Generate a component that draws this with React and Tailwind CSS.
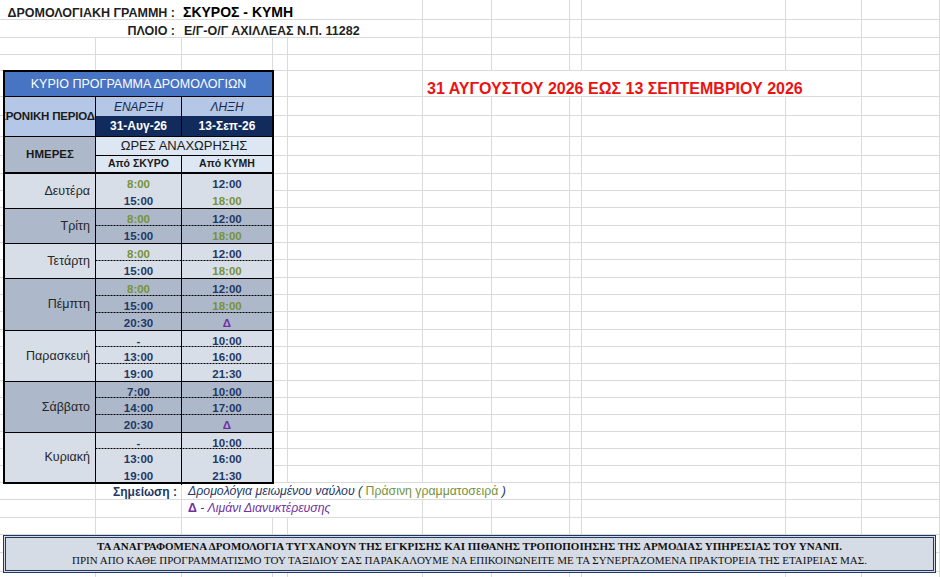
import React from "react";

const COLS = "grid-cols-[96px_86px_91px_15px_135px_69px_78px_12px_204px_76px_78px]";
const ROWS =
  "grid-rows-[20px_18px_17px_16px_26px_19px_21px_19px_18px_17px_17px_18px_17px_17px_18px_17px_17px_18px_17px_17px_17px_17px_17px_17px_17px_17px_17px_17px_18px_17px_18px_19px_18px]";

const DASH =
  "bg-[linear-gradient(to_right,#000_2px,transparent_2px)] bg-[length:3px_1px] bg-bottom bg-repeat-x";

const N = "text-[#1f3864]";
const GR = "text-[#76923c]";
const P = "text-[#7030a0]";

const LIGHT = "bg-[#d8dee7]";
const DARK = "bg-[#adb9ca]";

const days = [
  {
    name: "Δευτέρα",
    bg: LIGHT,
    h: "h-[34px]",
    first: true,
    dashed: false,
    rows: [
      { h: "h-[17px]", a: ["8:00", GR], b: ["12:00", N] },
      { h: "h-[17px]", a: ["15:00", N], b: ["18:00", GR] },
    ],
  },
  {
    name: "Τρίτη",
    bg: DARK,
    h: "h-[35px]",
    dashed: true,
    rows: [
      { h: "h-[17px]", a: ["8:00", GR], b: ["12:00", N] },
      { h: "h-[17px]", a: ["15:00", N], b: ["18:00", GR] },
    ],
  },
  {
    name: "Τετάρτη",
    bg: LIGHT,
    h: "h-[35px]",
    dashed: true,
    rows: [
      { h: "h-[17px]", a: ["8:00", GR], b: ["12:00", N] },
      { h: "h-[17px]", a: ["15:00", N], b: ["18:00", GR] },
    ],
  },
  {
    name: "Πέμπτη",
    bg: DARK,
    h: "h-[52px]",
    dashed: true,
    rows: [
      { h: "h-[17px]", a: ["8:00", GR], b: ["12:00", N] },
      { h: "h-[17px]", a: ["15:00", N], b: ["18:00", GR] },
      { h: "h-[17px]", a: ["20:30", N], b: ["Δ", P] },
    ],
  },
  {
    name: "Παρασκευή",
    bg: LIGHT,
    h: "h-[51px]",
    dashed: true,
    rows: [
      { h: "h-[16px]", a: ["-", N], b: ["10:00", N] },
      { h: "h-[17px]", a: ["13:00", N], b: ["16:00", N] },
      { h: "h-[17px]", a: ["19:00", N], b: ["21:30", N] },
    ],
  },
  {
    name: "Σάββατο",
    bg: DARK,
    h: "h-[51px]",
    dashed: true,
    rows: [
      { h: "h-[16px]", a: ["7:00", N], b: ["10:00", N] },
      { h: "h-[17px]", a: ["14:00", N], b: ["17:00", N] },
      { h: "h-[17px]", a: ["20:30", N], b: ["Δ", P] },
    ],
  },
  {
    name: "Κυριακή",
    bg: LIGHT,
    h: "h-[50px]",
    dashed: true,
    onlyFirstDash: true,
    rows: [
      { h: "h-[16px]", a: ["-", N], b: ["10:00", N] },
      { h: "h-[17px]", a: ["13:00", N], b: ["16:00", N] },
      { h: "h-[16px]", a: ["19:00", N], b: ["21:30", N] },
    ],
  },
];

function Gridlines() {
  return (
    <div className={`col-start-1 col-end-12 row-start-1 row-end-34 grid ${COLS} ${ROWS}`}>
      {Array.from({ length: 11 * 33 }, (_, i) => (
        <div key={i} className="border-r border-b border-[#dadada]" />
      ))}
    </div>
  );
}

function Day({ d }) {
  return (
    <div
      className={`shrink-0 grid grid-cols-[91px_176px] ${d.bg} ${d.h} ${
        d.first ? "" : "border-t border-black"
      }`}
    >
      <div className="border-r border-black flex items-center justify-end pr-[5px] text-[12.5px] text-[#262626]">
        {d.name}
      </div>
      <div className="flex flex-col">
        {d.rows.map((r, i) => {
          const dashed =
            d.dashed && i < d.rows.length - 1 && (!d.onlyFirstDash || i === 0);
          return (
            <div key={i} className={`shrink-0 grid grid-cols-[86px_90px] ${r.h} ${dashed ? DASH : ""}`}>
              <div
                className={`border-r border-black flex items-center justify-center pt-[2px] font-bold text-[11.5px] ${r.a[1]}`}
              >
                {r.a[0]}
              </div>
              <div className={`flex items-center justify-center pt-[2px] font-bold text-[11.5px] ${r.b[1]}`}>
                {r.b[0]}
              </div>
            </div>
          );
        })}
      </div>
    </div>
  );
}

function Table() {
  return (
    <div className="col-start-1 col-end-4 row-start-5 row-end-28 self-start justify-self-start ml-[3px] -mt-[1px] w-[271px] h-[414px] border-2 border-black flex flex-col bg-white">
      <div className="h-[25px] shrink-0 bg-[#4874c4] border-b border-black flex items-center justify-center text-white text-[12.5px] whitespace-nowrap">
        ΚΥΡΙΟ ΠΡΟΓΡΑΜΜΑ ΔΡΟΜΟΛΟΓΙΩΝ
      </div>
      <div className="h-[40px] shrink-0 border-b border-black grid grid-cols-[91px_86px_90px] grid-rows-[19px_20px]">
        <div className="row-span-2 bg-[#b4c7e7] border-r border-black overflow-hidden flex items-center justify-center pl-[8px] font-bold text-[11.5px] tracking-[-0.2px] text-[#1a1a1a] whitespace-nowrap">
          ΧΡΟΝΙΚΗ ΠΕΡΙΟΔΟΣ
        </div>
        <div className="bg-[#b4c7e7] border-r border-black flex items-center justify-center italic text-[12px] text-[#152a50]">
          ΕΝΑΡΞΗ
        </div>
        <div className="bg-[#b4c7e7] flex items-center justify-center italic text-[12px] text-[#152a50]">
          ΛΗΞΗ
        </div>
        <div className="bg-[#112c5c] border-r border-black flex items-center justify-center font-bold text-[12px] text-white">
          31-Αυγ-26
        </div>
        <div className="bg-[#112c5c] flex items-center justify-center font-bold text-[12px] text-white">
          13-Σεπ-26
        </div>
      </div>
      <div className="h-[37px] shrink-0 border-b-2 border-black grid grid-cols-[91px_86px_90px] grid-rows-[19px_16px]">
        <div className="row-span-2 bg-[#adb9ca] border-r border-black flex items-center justify-center font-bold text-[11.5px] text-[#1a1a1a]">
          ΗΜΕΡΕΣ
        </div>
        <div className="col-span-2 bg-[#dde7f3] border-b border-black flex items-center justify-center text-[13px] text-[#1a1a1a]">
          ΩΡΕΣ ΑΝΑΧΩΡΗΣΗΣ
        </div>
        <div className="bg-[#dde7f3] border-r border-black flex items-center justify-center font-bold text-[10.5px] text-[#1a1a1a]">
          Από ΣΚΥΡΟ
        </div>
        <div className="bg-[#dde7f3] flex items-center justify-center font-bold text-[10.5px] text-[#1a1a1a]">
          Από ΚΥΜΗ
        </div>
      </div>
      {days.map((d) => (
        <Day key={d.name} d={d} />
      ))}
    </div>
  );
}

export default function App() {
  return (
    <div className="w-[940px] h-[577px] overflow-hidden bg-white font-['Liberation_Sans',Arial,sans-serif] text-[#1f1f1f]">
      <div className={`grid ${COLS} ${ROWS}`}>
        <Gridlines />

        {/* Row 1 */}
        <div className="col-start-1 col-end-6 row-start-1 bg-white border-r border-b border-[#dadada] flex items-end whitespace-nowrap font-bold text-[12.5px]">
          <div className="leading-[12px]">
            <span className="inline-block w-[182px] pr-[7px] text-right text-[12.5px]">
              ΔΡΟΜΟΛΟΓΙΑΚΗ ΓΡΑΜΜΗ :
            </span>
            <span className="pl-[1px] text-[14px] text-black">ΣΚΥΡΟΣ - ΚΥΜΗ</span>
          </div>
        </div>

        {/* Row 2 */}
        <div className="col-start-1 col-end-6 row-start-2 bg-white border-r border-b border-[#dadada] flex items-end whitespace-nowrap font-bold text-[12.5px]">
          <div className="leading-[12px]">
            <span className="inline-block w-[182px] pr-[7px] text-right">ΠΛΟΙΟ :</span>
            <span className="pl-[2px]">Ε/Γ-Ο/Γ ΑΧΙΛΛΕΑΣ Ν.Π. 11282</span>
          </div>
        </div>

        {/* Red period title */}
        <div className="col-start-6 col-end-11 row-start-5 bg-white border-r border-b border-[#dadada] flex items-end pl-[4px] leading-[14px] whitespace-nowrap font-bold text-[16px] text-[#ee1111]">
          31 ΑΥΓΟΥΣΤΟΥ 2026 ΕΩΣ 13 ΣΕΠΤΕΜΒΡΙΟΥ 2026
        </div>

        {/* Notes */}
        <div className="col-start-2 row-start-28 flex items-center justify-end pr-[5px] font-bold text-[12px] text-[#1f3864] whitespace-nowrap">
          Σημείωση :
        </div>
        <div className="col-start-3 col-end-8 row-start-28 bg-white border-r border-b border-[#dadada] flex items-center pl-[6px] text-[12.3px] whitespace-nowrap">
          <span className="italic text-[#1f3864]">Δρομολόγια μειωμένου ναύλου (&nbsp;</span>
          <span className="text-[#76923c]">Πράσινη γραμματοσειρά</span>
          <span className="italic text-[#1f3864]">&nbsp;)</span>
        </div>
        <div className="col-start-3 col-end-6 row-start-29 bg-white border-r border-b border-[#dadada] flex items-center pl-[6px] text-[12.3px] text-[#7030a0] whitespace-nowrap">
          <span className="font-bold">Δ</span>
          <span className="italic">&nbsp;- Λιμάνι Διανυκτέρευσης</span>
        </div>

        {/* Banner */}
        <div className="col-start-1 col-end-12 row-start-31 row-end-33 self-start ml-[3px] mr-[4px] h-[38px] pb-[3px] border-[3px] border-double border-[#1f3864] bg-[#d6dce5] flex flex-col items-center justify-center font-['Liberation_Serif',serif] text-[11px] leading-[14px] text-[#111] whitespace-nowrap">
          <div className="font-bold">
            ΤΑ ΑΝΑΓΡΑΦΟΜΕΝΑ ΔΡΟΜΟΛΟΓΙΑ ΤΥΓΧΑΝΟΥΝ ΤΗΣ ΕΓΚΡΙΣΗΣ ΚΑΙ ΠΙΘΑΝΗΣ ΤΡΟΠΟΠΟΙΗΣΗΣ ΤΗΣ ΑΡΜΟΔΙΑΣ ΥΠΗΡΕΣΙΑΣ ΤΟΥ ΥΝΑΝΠ.
          </div>
          <div>
            ΠΡΙΝ ΑΠΟ ΚΑΘΕ ΠΡΟΓΡΑΜΜΑΤΙΣΜΟ ΤΟΥ ΤΑΞΙΔΙΟΥ ΣΑΣ ΠΑΡΑΚΑΛΟΥΜΕ ΝΑ ΕΠΙΚΟΙΝΩΝΕΙΤΕ ΜΕ ΤΑ ΣΥΝΕΡΓΑΖΟΜΕΝΑ ΠΡΑΚΤΟΡΕΙΑ ΤΗΣ ΕΤΑΙΡΕΙΑΣ ΜΑΣ.
          </div>
        </div>

        <Table />
      </div>
    </div>
  );
}
